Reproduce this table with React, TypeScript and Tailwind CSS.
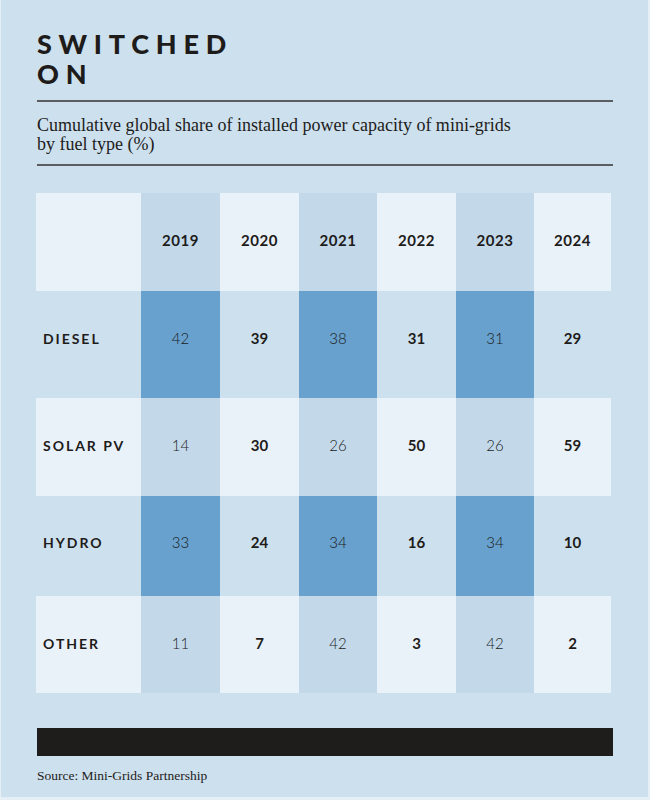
import React from "react";

type Row = {
  label: string;
  values: string[];
  tone: "light" | "dark";
  h: string;
  pb: string;
};

const years = ["2019", "2020", "2021", "2022", "2023", "2024"];

const rows: Row[] = [
  { label: "DIESEL", values: ["42", "39", "38", "31", "31", "29"], tone: "dark", h: "h-[107px]", pb: "pb-[13px]" },
  { label: "SOLAR PV", values: ["14", "30", "26", "50", "26", "59"], tone: "light", h: "h-[98px]", pb: "pb-[3px]" },
  { label: "HYDRO", values: ["33", "24", "34", "16", "34", "10"], tone: "dark", h: "h-[100px]", pb: "pb-[8px]" },
  { label: "OTHER", values: ["11", "7", "42", "3", "42", "2"], tone: "light", h: "h-[97px]", pb: "pb-[2px]" },
];

const colWidths = ["w-[79px]", "w-[79px]", "w-[78px]", "w-[79px]", "w-[78px]", "w-[77px]"];

function cellBg(tone: "light" | "dark", i: number) {
  const odd = i % 2 === 0; // 2019, 2021, 2023
  if (tone === "light") return odd ? "bg-[#c3d9ea]" : "bg-[#eaf2f9]";
  return odd ? "bg-[#68a1cd]" : "bg-transparent";
}

export default function App() {
  return (
    <div className="w-[650px] h-[800px] bg-[#e6eff6] pl-px pr-[2px] pb-[3px]">
      <div className="h-full bg-[#cde0ed] pl-[36px] pr-[35px] pt-[29px] flex flex-col">
        <h1 className="font-['Lato'] font-black text-[27px] leading-[30px] tracking-[0.25em] text-[#1e1c1b]">
          SWITCHED
          <br />
          ON
        </h1>
        <div className="mt-[11px] h-[2px] bg-[#5c5d60]" />
        <p className="mt-[14px] font-['Liberation_Serif',serif] text-[18px] leading-[19px] text-[#1e1c1b]">
          Cumulative global share of installed power capacity of mini-grids
          <br />
          by fuel type (%)
        </p>
        <div className="mt-[10px] h-[2px] bg-[#5c5d60]" />

        <div className="mt-[27px] -ml-px flex flex-col font-['Lato',sans-serif]">
          {/* header */}
          <div className="flex h-[98px]">
            <div className="w-[105px] bg-[#eaf2f9]" />
            {years.map((y, i) => (
              <div
                key={y}
                className={`${colWidths[i]} ${cellBg("light", i)} flex items-center justify-center pb-[4px] text-[15px] font-bold tracking-[0.04em] text-[#1e1c1b]`}
              >
                {y}
              </div>
            ))}
          </div>
          {rows.map((r) => (
            <div key={r.label} className={`flex ${r.h}`}>
              <div
                className={`w-[105px] ${r.tone === "light" ? "bg-[#eaf2f9]" : "bg-transparent"} flex items-center pl-[7px] ${r.pb} text-[14px] font-bold tracking-[0.14em] text-[#1e1c1b]`}
              >
                {r.label}
              </div>
              {r.values.map((v, i) => (
                <div
                  key={i}
                  className={`${colWidths[i]} ${cellBg(r.tone, i)} flex items-center justify-center ${r.pb} text-[15px] ${
                    i % 2 === 0 ? "font-light text-[#1a1a1b]" : "font-bold text-[#1e1c1b]"
                  }`}
                >
                  {v}
                </div>
              ))}
            </div>
          ))}
        </div>

        <div className="mt-[35px] h-[28px] bg-[#1e1d1b]" />
        <p className="mt-[12px] font-['Liberation_Serif',serif] text-[13.5px] leading-[16px] text-[#1e1c1b]">
          Source: Mini-Grids Partnership
        </p>
      </div>
    </div>
  );
}
